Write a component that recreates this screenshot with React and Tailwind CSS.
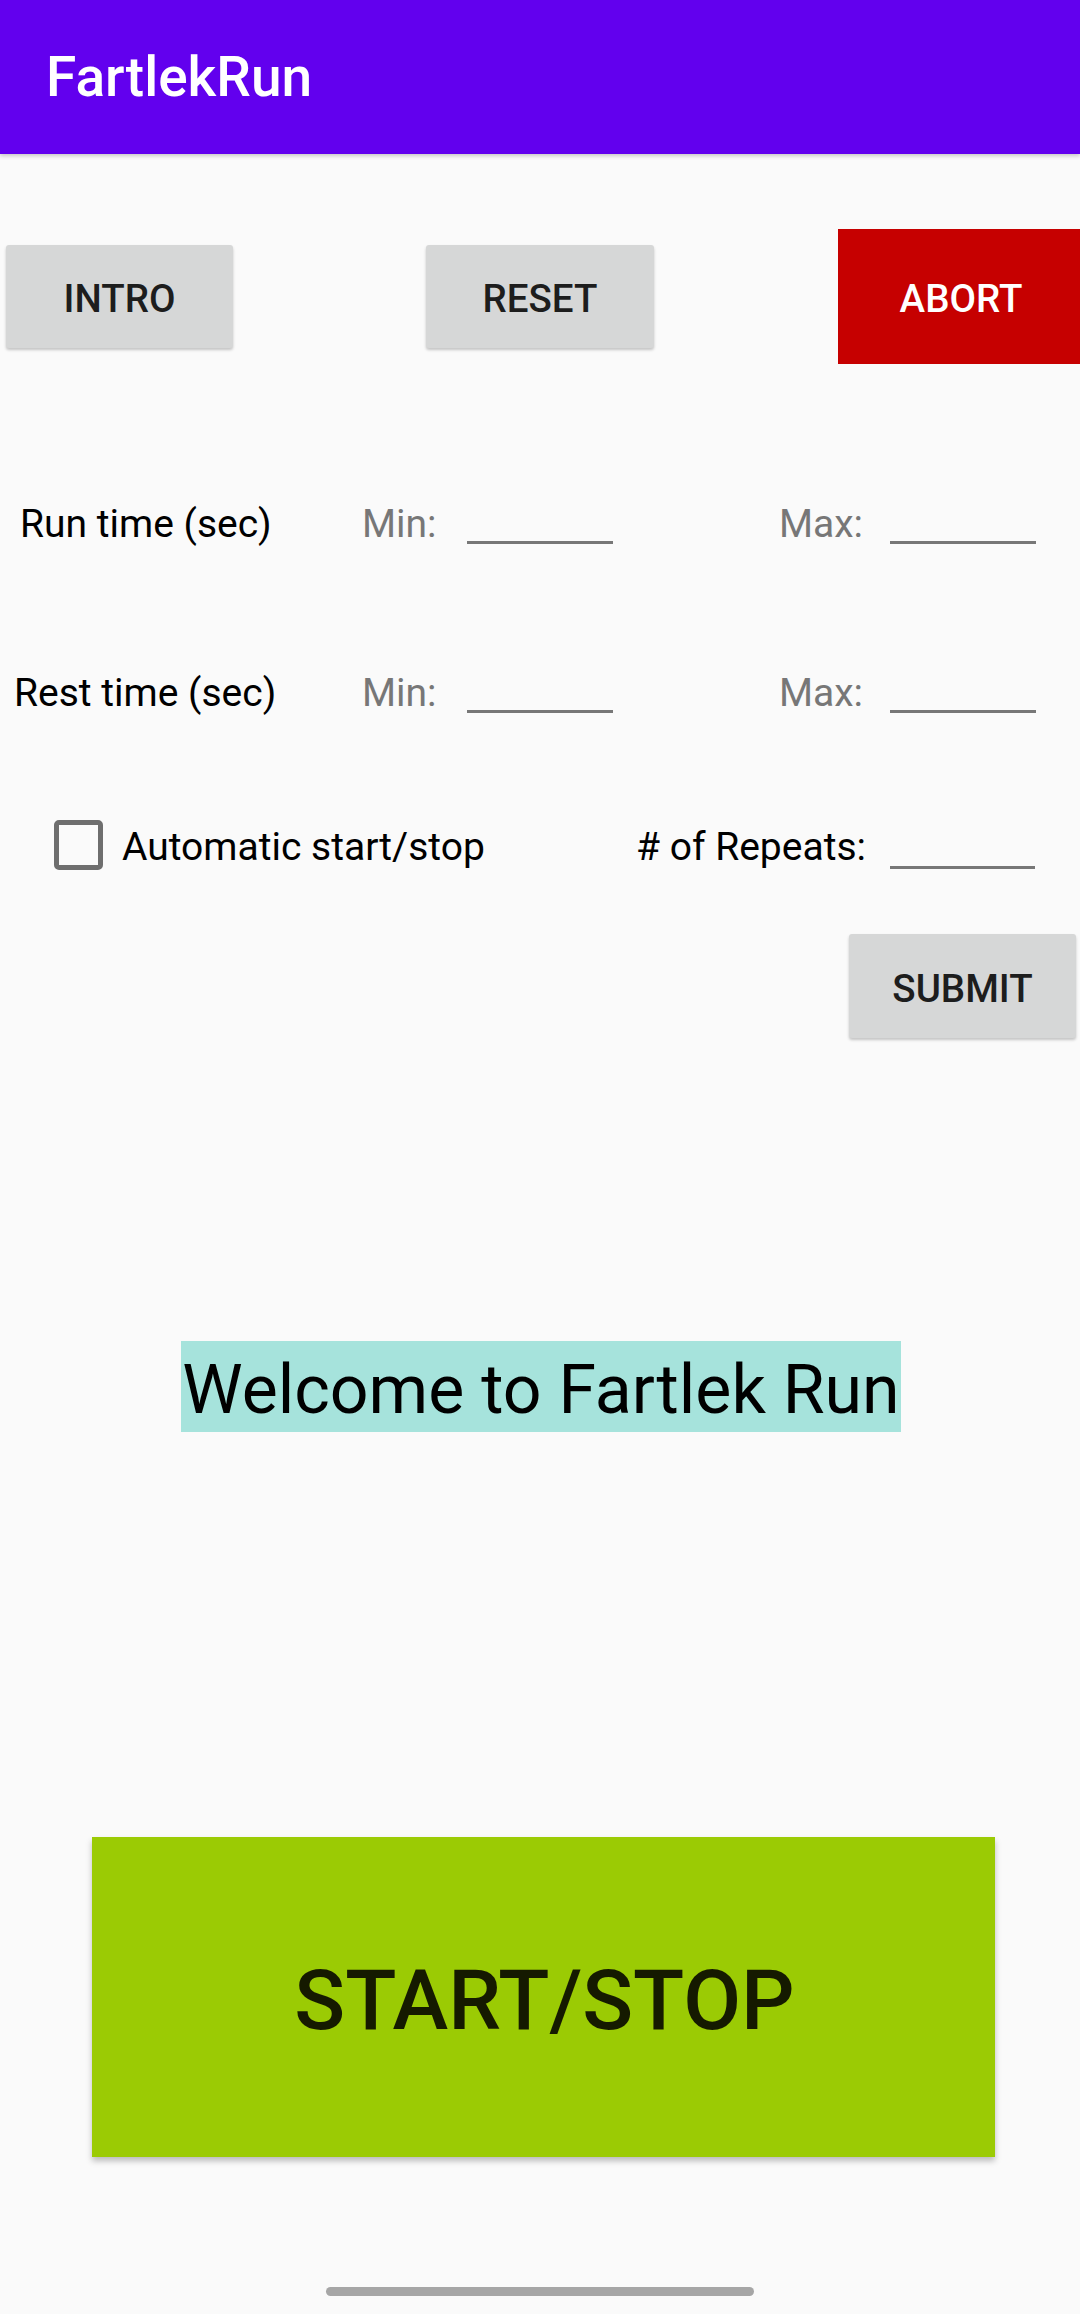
import React from "react"

const GrayButton = ({ label, className }) => (
  <button
    className={`h-[103px] bg-[#D6D7D7] text-[#1d1d1d] text-[38.5px] font-medium flex items-center justify-center pt-[5px] shadow-[0_2px_3px_rgba(0,0,0,0.22)] rounded-[3px] shrink-0 ${className}`}
  >
    {label}
  </button>
)

const Underline = ({ className }) => (
  <div className={`h-[3px] w-[146px] bg-[#777777] mt-[40px] shrink-0 ${className || ""}`} />
)

const TimeRow = ({ label, labelClass, className }) => (
  <div className={`flex items-start h-[46px] leading-[46px] text-[39px] ${className}`}>
    <div className={`w-[362px] shrink-0 text-black ${labelClass}`}>{label}</div>
    <div className="w-[105px] shrink-0 text-[#777777]">Min:</div>
    <Underline />
    <div className="w-[111px] ml-[166px] shrink-0 text-[#777777]">Max:</div>
    <Underline className="w-[145px]" />
  </div>
)

export default function App() {
  return (
    <div
      className="w-[1080px] h-[2314px] bg-[#FAFAFA] flex flex-col overflow-hidden"
      style={{ fontFamily: "Roboto, 'Noto Sans', sans-serif" }}
    >
      <header className="h-[154px] shrink-0 bg-[#6200EE] flex items-center pl-[46px] shadow-[0_2px_4px_rgba(0,0,0,0.2)]">
        <h1 className="text-white text-[55px] font-medium leading-none">FartlekRun</h1>
      </header>

      {/* top buttons */}
      <div className="mt-[75px] h-[135px] flex items-center">
        <GrayButton label="INTRO" className="ml-[6px] w-[227px]" />
        <GrayButton label="RESET" className="ml-[193px] w-[228px]" />
        <button className="ml-[184px] w-[242px] h-[135px] shrink-0 bg-[#C60000] text-white text-[38.5px] font-medium flex items-center justify-center pl-[4px] pt-[5px]">
          ABORT
        </button>
      </div>

      <TimeRow label="Run time (sec)" labelClass="pl-[20px]" className="mt-[137px]" />
      <TimeRow label="Rest time (sec)" labelClass="pl-[14px]" className="mt-[123px]" />

      {/* checkbox + repeats */}
      <div className="mt-[104px] flex items-start text-[39px] leading-[46px]">
        <div className="ml-[54px] w-[49px] h-[50px] border-[5px] border-[#6E6E6E] rounded-[5px] shrink-0" />
        <div className="ml-[19px] mt-[4px] w-[514px] shrink-0 text-black">Automatic start/stop</div>
        <div className="w-[254px] mt-[4px] shrink-0 text-black">
          # of Repeats:
        </div>
        <div className="h-[3px] w-[145px] bg-[#777777] mt-[46px] shrink-0" />
      </div>

      <div className="mt-[64px] flex">
        <GrayButton label="SUBMIT" className="ml-[849px] w-[227px] h-[104px]" />
      </div>

      <div className="mt-[303px] flex justify-center">
        <div className="bg-[#A6E3DC] text-black text-[68px] leading-[91px] pt-[4px] h-[91px] px-[1px] ml-[2px]">
          Welcome to Fartlek Run
        </div>
      </div>

      <div className="mt-[405px] flex">
        <button className="ml-[92px] w-[903px] h-[320px] shrink-0 bg-[#9BCB04] text-[#151a00] text-[84px] font-medium flex items-center justify-center pl-[2px] pt-[8px] shadow-[0_4px_6px_rgba(0,0,0,0.25)]">
          START/STOP
        </button>
      </div>

      <div className="mt-[130px] flex justify-center">
        <div className="w-[428px] h-[9px] rounded-full bg-[#A6A6A6]" />
      </div>
    </div>
  )
}
